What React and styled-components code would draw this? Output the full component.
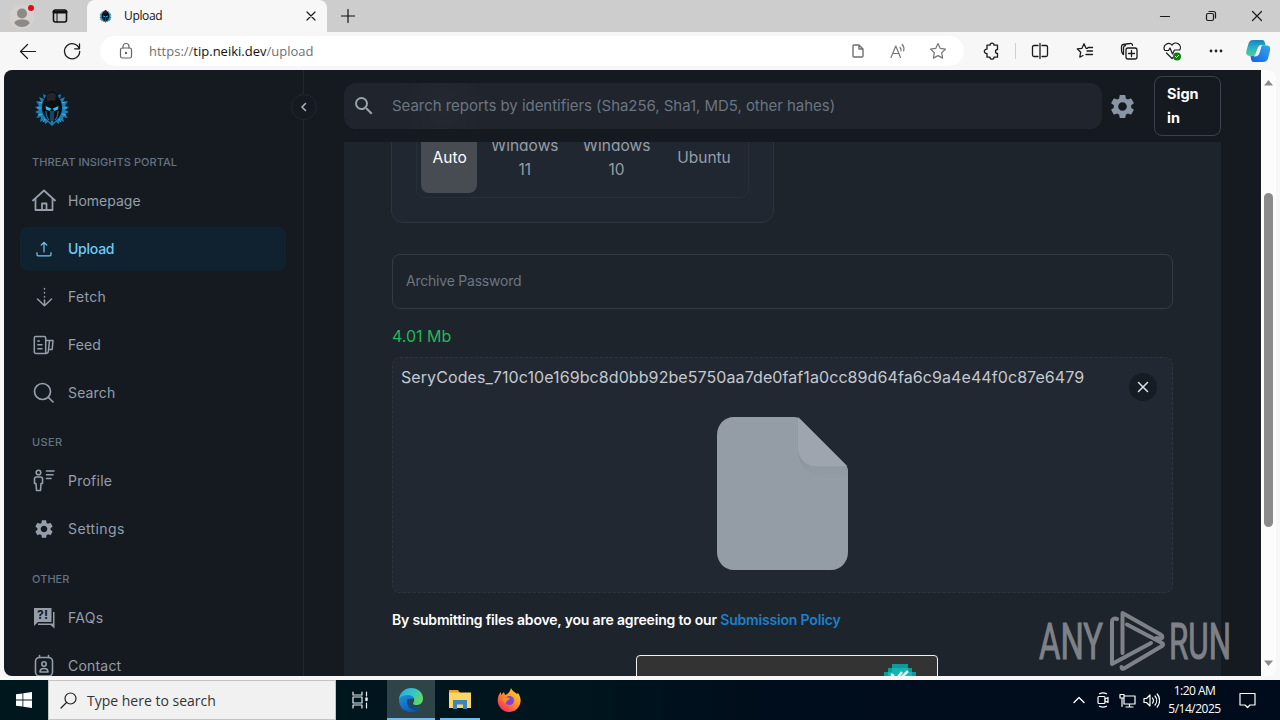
import React from 'react';
import styled, { createGlobalStyle } from 'styled-components';
import { MdSearch, MdSettings } from 'react-icons/md';

const GlobalStyle = createGlobalStyle`
  * {
    box-sizing: border-box;
  }

  body {
    margin: 0;
    overflow: hidden;
  }

  svg {
    display: block;
    flex-shrink: 0;
  }
`;

const Screen = styled.div`
  width: 1280px;
  height: 720px;
  display: flex;
  flex-direction: column;
  overflow: hidden;
  background: #f7f7f7;
  color: #1b1b1b;
  font-family: 'Open Sans', 'Noto Sans', sans-serif;
  font-size: 12px;
`;

/* browser chrome */

const TabStrip = styled.div`
  height: 32px;
  display: flex;
  align-items: center;
  background: #cdcdcd;
`;

const StripIcon = styled.div`
  width: ${(p) => p.$w}px;
  height: 32px;
  display: flex;
  align-items: center;
  justify-content: center;
`;

const Tab = styled.div`
  width: 240px;
  height: 32px;
  display: flex;
  align-items: center;
  padding: 0 9px 0 12px;
  border-radius: 8px 8px 0 0;
  background: #f7f7f7;
`;

const TabTitle = styled.span`
  flex: 1;
  margin-left: 12px;
  color: #111;
  font-size: 12px;
  line-height: 16px;
  letter-spacing: -0.35px;
`;

const WindowButtons = styled.div`
  display: flex;
  margin-left: auto;
`;

const Toolbar = styled.div`
  height: 38px;
  display: flex;
  align-items: center;
  background: #f7f7f7;
`;

const ToolIcon = styled.div`
  width: ${(p) => p.$w || 46}px;
  display: flex;
  align-items: center;
  justify-content: center;
`;

const AddressBar = styled.div`
  width: 864px;
  height: 30px;
  margin-left: 4px;
  display: flex;
  align-items: center;
  padding-left: 17px;
  border-radius: 15px;
  background: #fff;
`;

const Url = styled.span`
  flex: 1;
  margin-left: 14px;
  color: #707070;
  font-size: 13px;
  letter-spacing: 0;

  b {
    color: #111;
    font-weight: 400;
  }
`;

const Divider = styled.div`
  width: 1px;
  height: 16px;
  margin-left: -5px;
  background: #cfcfcf;
`;

/* page */

const Viewport = styled.div`
  height: 606px;
  margin: 0 4px;
  display: flex;
`;

const Page = styled.div`
  width: 1257px;
  height: 606px;
  display: flex;
  overflow: hidden;
  border-radius: 8px 0 0 8px;
  background: #151a21;
  color: #959ea9;
  font-family: Inter, 'Liberation Sans', sans-serif;
`;

const ScrollBar = styled.div`
  width: 15px;
  display: flex;
  flex-direction: column;
  align-items: center;
  justify-content: space-between;
  padding: 10px 0 10px;
  border-radius: 0 8px 8px 0;
  background: #fcfcfc;
`;

const ScrollThumb = styled.div`
  width: 9px;
  height: 334px;
  margin: auto 0 133px;
  border-radius: 5px;
  background: #8b8b8b;
`;

const Sidebar = styled.nav`
  position: relative;
  width: 300px;
  display: flex;
  flex-direction: column;
  flex-shrink: 0;
  padding: 18px 17px 0 16px;
  border-right: 1px solid #1f262e;
`;

const LogoBox = styled.div`
  height: 54px;
  flex-shrink: 0;
  padding: 3px 0 0 14px;
`;

const CollapseButton = styled.div`
  position: absolute;
  top: 24px;
  right: -14px;
  width: 26px;
  height: 26px;
  display: flex;
  align-items: center;
  justify-content: center;
  border: 1px solid #20272f;
  border-radius: 50%;
  background: #151a21;
`;

const SectionLabel = styled.div`
  height: ${(p) => p.$h}px;
  display: flex;
  align-items: flex-end;
  flex-shrink: 0;
  padding: 0 0 8px 12px;
  color: #637381;
  font-size: 11px;
  font-weight: 500;
  line-height: 18px;
  letter-spacing: ${(p) => p.$track || 0}px;
`;

const NavItem = styled.div`
  height: 44px;
  margin-bottom: 4px;
  display: flex;
  align-items: center;
  flex-shrink: 0;
  padding-left: 12px;
  border-radius: 8px;
  background: ${(p) => (p.$active ? '#10222f' : 'transparent')};
  color: ${(p) => (p.$active ? '#72c9f3' : '#959ea9')};
  font-size: 14px;
  font-weight: ${(p) => (p.$active ? 500 : 400)};
  letter-spacing: ${(p) => p.$track || 0}px;

  span {
    margin: 0 0 1px 12px;
  }
`;

const Main = styled.main`
  width: 957px;
  display: flex;
  flex-direction: column;
`;

const Header = styled.header`
  height: 72px;
  display: flex;
  align-items: center;
  flex-shrink: 0;
  padding: 0 40px;
`;

const SearchField = styled.div`
  width: 758px;
  height: 46px;
  display: flex;
  align-items: center;
  flex-shrink: 0;
  padding-left: 8px;
  border-radius: 12px;
  background: radial-gradient(ellipse 40px 60px at 100px 23px, #242931, #1f242d);
  color: #6b7581;
  font-size: 15px;
  letter-spacing: -0.04px;

  span {
    margin: 0 0 2px 16px;
  }
`;

const HeaderGear = styled.div`
  margin: 0 17px 0 6px;
`;

const SignInButton = styled.div`
  width: 67px;
  height: 60px;
  padding: 5px 12px;
  border: 1px solid #3b424b;
  border-radius: 8px;
  color: #fff;
  font-size: 14.5px;
  font-weight: 700;
  line-height: 24px;
`;

const Panel = styled.section`
  width: 877px;
  height: 534px;
  margin-left: 40px;
  padding: 0 48px;
  display: flex;
  flex-direction: column;
  overflow: hidden;
  background: #1d242b;
`;

const OsCard = styled.div`
  width: 383px;
  height: 120px;
  flex-shrink: 0;
  margin: -39px 0 0 -1px;
  padding: 12px 24px 24px;
  border: 1px solid #2d343c;
  border-radius: 12px;
  background: #202730;
`;

const OsToggle = styled.div`
  height: 82px;
  display: flex;
  gap: 2px;
  padding: 4px;
  border: 1px solid #282f37;
  border-radius: 8px;
`;

const OsOption = styled.div`
  width: ${(p) => p.$w}px;
  display: flex;
  align-items: center;
  justify-content: center;
  padding: 2px 0 0 1px;
  border-radius: 8px;
  background: ${(p) => (p.$selected ? '#474b52' : 'transparent')};
  color: ${(p) => (p.$selected ? '#fff' : '#959ea9')};
  font-size: 15.5px;
  line-height: 24px;
  text-align: center;
`;

const PasswordField = styled.div`
  height: 55px;
  margin-top: 31px;
  flex-shrink: 0;
  display: flex;
  align-items: center;
  padding: 0 0 2px 13px;
  border: 1px solid #343b43;
  border-radius: 8px;
  color: #6b7681;
  font-size: 14px;
  letter-spacing: -0.22px;
`;

const FileSize = styled.div`
  height: 48px;
  flex-shrink: 0;
  color: #22b95a;
  font-size: 16px;
  line-height: 54px;
`;

const DropZone = styled.div`
  position: relative;
  width: 781px;
  height: 236px;
  flex-shrink: 0;
  padding: 7px 8px;
  border: 1px dashed #2e353f;
  border-radius: 8px;
  background: #222831;
  color: #c4c9d0;
`;

const FileName = styled.div`
  height: 24px;
  font-size: 16px;
  line-height: 24px;
  letter-spacing: 0.085px;
  white-space: nowrap;
`;

const FilePreview = styled.div`
  display: flex;
  justify-content: center;
  padding-top: 28px;
`;

const RemoveButton = styled.div`
  position: absolute;
  top: 15px;
  right: 15px;
  width: 28px;
  height: 28px;
  display: flex;
  align-items: center;
  justify-content: center;
  border-radius: 50%;
  background: #161c24;
`;

const Policy = styled.p`
  height: 22px;
  margin: 16px 0 0;
  flex-shrink: 0;
  color: #fff;
  font-size: 14px;
  font-weight: 600;
  line-height: 22px;
  letter-spacing: -0.18px;
  white-space: nowrap;

  a {
    color: #1d80cb;
  }
`;

const Captcha = styled.div`
  width: 302px;
  height: 76px;
  margin: 24px 0 0 244px;
  flex-shrink: 0;
  display: flex;
  justify-content: flex-end;
  padding: 8px 21px;
  border: 1px solid #f0f0f0;
  border-radius: 4px;
  background: #333;
`;

const Watermark = styled.div`
  position: absolute;
  left: 1038px;
  top: 606px;
`;

/* taskbar */

const Taskbar = styled.div`
  height: 40px;
  margin-top: 4px;
  display: flex;
  align-items: center;
  background: linear-gradient(90deg, #00171d 0%, #00151d 45%, #000d1c 60%, #000c1b 100%);
  color: #fff;
`;

const StartButton = styled.div`
  width: 48px;
  height: 40px;
  display: flex;
  align-items: center;
  justify-content: center;
`;

const TaskSearch = styled.div`
  width: 288px;
  height: 40px;
  display: flex;
  align-items: center;
  padding-left: 11px;
  border: 1px solid #c3c3c3;
  background: #f1f1f1;
  color: #333;
  font-size: 14px;

  span {
    margin-left: 10px;
  }
`;

const TaskApp = styled.div`
  width: ${(p) => p.$w || 48}px;
  height: 40px;
  display: flex;
  align-items: center;
  justify-content: center;
  margin-left: ${(p) => p.$ml || 0}px;
  border-bottom: ${(p) => (p.$running ? '2px solid #76b9ed' : '0')};
  padding-top: ${(p) => (p.$running ? 2 : 0)}px;
  background: ${(p) => (p.$focused ? '#2f4449' : 'transparent')};
`;

const Tray = styled.div`
  display: flex;
  align-items: center;
  margin-left: auto;
`;

const TrayIcon = styled.div`
  width: 24px;
  display: flex;
  justify-content: center;
`;

const Clock = styled.div`
  width: 62px;
  padding-left: 1px;
  font-size: 12px;
  line-height: 18px;
  text-align: center;
  letter-spacing: -0.5px;
  white-space: nowrap;
`;

const Notifications = styled.div`
  width: 44px;
  display: flex;
  justify-content: center;
  margin-right: 11px;
`;

const Line = ({ size = 20, w, h, box, color = '#1b1b1b', sw = 1.2, children }) => (
  <svg
    width={w || size}
    height={h || size}
    viewBox={box || `0 0 ${w || size} ${h || size}`}
    fill="none"
    stroke={color}
    strokeWidth={sw}
    strokeLinecap="round"
    strokeLinejoin="round"
  >
    {children}
  </svg>
);

const Logo = ({ size }) => (
  <svg width={size} height={size} viewBox="0 0 36 36">
    <path
      d="M13 5L9 3l1 5-5-2 2 5-5-1 3 5-4 1 4 3-4 2 4 2-3 4 5-1-1 5 4-2 1 4 3-2 4 4 4-4 3 2 1-4 4 2-1-5 5 1-3-4 4-2-4-2 4-3-4-1 3-5-5 1 2-5-5 2 1-5-4 2z"
      fill="#1b7fb5"
    />
    <path d="M8 12l-3-1M7 17H3M8 23l-4 1M28 12l3-1M29 17h4M28 23l4 1M11 28l-2 3M25 28l2 3" stroke="#4fb7e6" strokeWidth="1" />
    <path d="M18 0c-6 3-10 9-10 17 0 7 4 11 8 14l2 1 2-1c4-3 8-7 8-14 0-8-4-14-10-17z" fill="#090f15" />
    <path d="M13 4c3-3 7-3 9 0l-1 6-4-1-4 2z" fill="#25262c" />
    <path d="M11.500 15l5.500 2.500-1 2.500-4-1.500zM24.500 15L19 17.500l1 2.500 4-1.500z" fill="#2fc0ef" />
    <path d="M16.500 20h3v9l-1.500 6-1.500-6z" fill="#247faf" />
    <path d="M12 20c0 4 1 7 3 9M24 20c0 4-1 7-3 9" fill="none" stroke="#1a6c98" strokeWidth="1.200" />
    <path d="M18 19v11" stroke="#0a1118" strokeWidth="1" />
  </svg>
);

const navIcons = {
  Homepage: (
    <Line size={24} color="currentColor" sw={1.8}>
      <path d="M1 11.500L12 1.500l11 10M3.500 9.500V21h17V9.500M10 21v-6.500h4.500V21" />
    </Line>
  ),
  Upload: (
    <Line size={24} color="currentColor" sw={1.2}>
      <path d="M12 15V5.500M9.300 8L12 5.300 14.700 8M5 15.500v2.200c0 .7.5 1.200 1.200 1.200h11.600c.7 0 1.200-.5 1.200-1.200v-2.200" />
    </Line>
  ),
  Fetch: (
    <Line size={24} color="currentColor" sw={1.5}>
      <path d="M12.500 3.500v.4M12.500 7.500v.4M12.500 11.500v.4M12.500 15v5.500M5.500 14l7 6.700 7-6.700" />
    </Line>
  ),
  Feed: (
    <Line size={24} color="currentColor" sw={1.5}>
      <path d="M3.800 3.500h8.400a1.500 1.500 0 0 1 1.500 1.500v15.500H4a1.700 1.700 0 0 1-1.700-1.700V5a1.500 1.500 0 0 1 1.500-1.500zM5.800 8h1.500M5.800 11.700h4.200M5.800 15.700h4.200M13.700 7.500h7.300l-.8 9h-3.200M17.500 7.800l-1.200 10.700c-.2 1.300-1 2-2.600 2" />
    </Line>
  ),
  Search: (
    <Line size={24} color="currentColor" sw={1.7}>
      <circle cx="10.500" cy="10.500" r="8" />
      <path d="M16.500 16.500l4.500 4.500" />
    </Line>
  ),
  Profile: (
    <Line size={24} color="currentColor" sw={1.6}>
      <circle cx="6.500" cy="3.500" r="2.300" />
      <path d="M4.500 8h4c1 0 2 .8 2 2v4.500H9l-.5 7h-4L4 14.500H2.500V10c0-1.200.8-2 2-2zM14.500 2H22M14.500 5.700H21M14.500 9.500H19" />
    </Line>
  ),
  Settings: (
    <svg width="24" height="24" viewBox="0 0 24 24">
      <MdSettings size={22} x={1} y={1} />
    </svg>
  ),
  FAQs: (
    <svg width="24" height="24" viewBox="0 0 24 24" fill="currentColor">
      <path d="M2 2h17.500v14H6l-4 4z" />
      <path d="M21 6h1.500v16.500l-4-3.500H6v-1.500h15z" />
      <text x="10.700" y="13" fill="#151a21" fontSize="12" fontWeight="700" textAnchor="middle">?!</text>
    </svg>
  ),
  Contact: (
    <Line size={24} color="currentColor" sw={1.6}>
      <rect x="3.500" y="3.500" width="17" height="18.500" rx="4" />
      <path d="M7.500 1.500v2M16.500 1.500v2" />
      <circle cx="12" cy="10" r="2.200" />
      <path d="M8 18c0-2.500 1.500-3.500 4-3.500s4 1 4 3.500z" />
    </Line>
  ),
};

const NavGroup = ({ items }) =>
  items.map(([name, track]) => (
    <NavItem key={name} $active={name === 'Upload'} $track={track}>
      {navIcons[name]}
      <span>{name}</span>
    </NavItem>
  ));

const BrowserTop = () => (
  <>
    <TabStrip>
      <StripIcon $w={44}>
        <svg width="28" height="28" viewBox="0 0 28 28">
          <circle cx="14" cy="15" r="12.500" fill="#d5d1ce" />
          <circle cx="14" cy="11.500" r="5" fill="#8c8987" />
          <path d="M6.500 21.500c0-3 3-4 7.500-4s7.500 1 7.500 4c-2 2.500-5 3.500-7.500 3.500s-5.500-1-7.500-3.500z" fill="#8c8987" />
          <circle cx="23" cy="6" r="3" fill="#e00b1c" />
        </svg>
      </StripIcon>
      <StripIcon $w={32}>
        <Line size={16} sw={1.6} color="#111">
          <rect x="1.500" y="2" width="13" height="12" rx="2" />
          <path d="M2 4h12" strokeWidth="3" />
          <path d="M5 5v9" strokeWidth="1" />
        </Line>
      </StripIcon>
      <StripIcon $w={11} />
      <Tab>
        <Logo size={13} />
        <TabTitle>Upload</TabTitle>
        <Line size={14}><path d="M3 3l8 8M11 3l-8 8" /></Line>
      </Tab>
      <StripIcon $w={42}>
        <Line size={14} color="#111"><path d="M7 .5v13M.5 7h13" /></Line>
      </StripIcon>
      <WindowButtons>
        <StripIcon $w={46}><Line size={12}><path d="M1.500 6.500h9" /></Line></StripIcon>
        <StripIcon $w={46}>
          <Line size={12}>
            <rect x="1.500" y="3.500" width="7" height="7" rx="1.500" />
            <path d="M4 1.500h4.500a2 2 0 0 1 2 2V8" />
          </Line>
        </StripIcon>
        <StripIcon $w={46}><Line size={12}><path d="M1.500 1.500l9 9M10.500 1.500l-9 9" /></Line></StripIcon>
      </WindowButtons>
    </TabStrip>
    <Toolbar>
      <ToolIcon $w={56}>
        <Line size={18}><path d="M16.500 9.500H1.500M8.500 2.500l-7 7 7 7" /></Line>
      </ToolIcon>
      <ToolIcon $w={32}>
        <Line size={18} sw={1.3}><path d="M16.200 6.500A7.600 7.600 0 1 0 16.700 9.500M16.500 2v4.800h-4.800" /></Line>
      </ToolIcon>
      <ToolIcon $w={8} />
      <AddressBar>
        <Line w={18} h={18} color="#666">
          <rect x="3.500" y="6" width="11" height="10" rx="1.800" />
          <path d="M6 6V4.500a3 3 0 0 1 6 0V6" />
          <circle cx="9" cy="11" r=".6" fill="#666" />
        </Line>
        <Url>https://<b>tip.neiki.dev</b>/upload</Url>
        <ToolIcon $w={40}>
          <Line w={12} h={14} color="#707070" sw={1.4}><path d="M1 2a1 1 0 0 1 1-1h5l4 4v7a1 1 0 0 1-1 1H2a1 1 0 0 1-1-1zM7 1v4h4" /></Line>
        </ToolIcon>
        <ToolIcon $w={40}>
          <Line size={16} color="#777">
            <path d="M1 14.500L5.800 3 10.500 14.500M2.600 10.500h6.400M10 4.500a4 4 0 0 1 1 3.500M12.200 1.500a7 7 0 0 1 1.500 6.300" />
          </Line>
        </ToolIcon>
        <ToolIcon $w={40}>
          <Line size={18} color="#777"><path d="M9 1.500l2.300 4.900 5.200.7-3.800 3.700.9 5.300L9 13.600l-4.600 2.500.9-5.300L1.500 7.100l5.200-.7z" /></Line>
        </ToolIcon>
        <ToolIcon $w={6} />
      </AddressBar>
      <ToolIcon $w={56}>
        <Line size={18} sw={1.3}>
          <path d="M4 3.200h3a2 2 0 0 1 4 0h3.500V7.500a2 2 0 0 0 0 4v3.700H11a2 2 0 0 1-4 0H4v-3.700a2.200 2.200 0 1 1 0-4.300z" />
        </Line>
      </ToolIcon>
      <Divider />
      <ToolIcon $w={48}>
        <Line size={18} sw={1.3}><path d="M9 1.500v15M7 3.500H3a1.500 1.500 0 0 0-1.500 1.500v8A1.500 1.500 0 0 0 3 14.500h4M11 3.500h4a1.500 1.500 0 0 1 1.500 1.500v8a1.500 1.500 0 0 1-1.500 1.500h-4" /></Line>
      </ToolIcon>
      <ToolIcon $w={42}>
        <Line size={18} sw={1.3}><path d="M11.500 6.300H10L8 1.800 6 6.300l-4.800.5 3.500 3.400-.9 5L7 13.500M11 9h5.500M10 12.500h6.500M12 5.500h4.500" /></Line>
      </ToolIcon>
      <ToolIcon $w={45}>
        <Line size={18} sw={1.3}>
          <rect x="6" y="6" width="11" height="11" rx="2" />
          <path d="M11.500 8.500v6M8.500 11.500h6M3.500 12.500C1 11 1.500 9 1.500 4.500A2 2 0 0 1 3 2.500L10 1.500a2 2 0 0 1 2.500 1.800M3.500 12.500V6a2.500 2.500 0 0 1 2-2.500" />
        </Line>
      </ToolIcon>
      <ToolIcon $w={42}>
        <Line size={19}>
          <path d="M1.500 8A4.500 4.500 0 0 1 9 3.200 4.500 4.500 0 0 1 16.700 8M2 8.500h3.500l1.500-2.500 2.500 6 2-4h5M3.500 11l5.500 5.500 1-1" />
          <circle cx="14" cy="14.500" r="4" fill="#107c10" stroke="none" />
          <path d="M12.500 14.500l1 1 2-2" stroke="#fff" strokeWidth="1" />
        </Line>
      </ToolIcon>
      <ToolIcon $w={46}>
        <Line size={16}><g fill="#222" stroke="none"><circle cx="3" cy="8" r="1.400" /><circle cx="8" cy="8" r="1.400" /><circle cx="13" cy="8" r="1.400" /></g></Line>
      </ToolIcon>
      <ToolIcon $w={38}>
        <svg width="24" height="24" viewBox="0 0 24 24">
          <defs>
            <linearGradient id="cpA" x1="0" y1="0" x2="0" y2="1"><stop offset="0" stopColor="#1782c8" /><stop offset=".5" stopColor="#2ab3c4" /><stop offset="1" stopColor="#4fd08a" /></linearGradient>
            <linearGradient id="cpB" x1="1" y1="0" x2="0" y2="1"><stop offset="0" stopColor="#35a9ea" /><stop offset="1" stopColor="#1560e0" /></linearGradient>
          </defs>
          <path d="M7 1h9c2 0 2.500 1 3 3l.7 2.500h-3c-2 0-3 1-3.500 3L11.500 14c-.5 2-1.500 3-3 3H4c-3 0-4.500-2-3.500-5.500l2-7C3.300 2 5 1 7 1z" fill="url(#cpA)" />
          <path d="M17 23H8c-2 0-2.500-1-3-3l-.5-3h4c2 0 3-1 3.500-3l1.500-5c.5-1.500 1.500-2.500 3-2.500h4c3 0 4.500 2 3.500 5.500l-2 7.500c-.8 2.500-2.500 3.500-5 3.500z" fill="url(#cpB)" />
          <path d="M15.500 6.500c-2 0-3 1-3.500 3L10 15c-.3 1-.7 1.700-1.500 2 3 0 4-1 4.500-3l1.500-5c.3-1.200.6-2 1-2.500z" fill="#f7f7f7" stroke="#f7f7f7" />
        </svg>
      </ToolIcon>
    </Toolbar>
  </>
);

const SidePanel = () => (
  <Sidebar>
    <LogoBox><Logo size={36} /></LogoBox>
    <SectionLabel $h={37} $track={0.05}>THREAT INSIGHTS PORTAL</SectionLabel>
    <NavGroup items={[['Homepage', 0], ['Upload', -0.25], ['Fetch', 0.3], ['Feed', 0.1], ['Search', 0.15]]} />
    <SectionLabel $h={40} $track={0.4}>USER</SectionLabel>
    <NavGroup items={[['Profile', 0.25], ['Settings', 0.4]]} />
    <SectionLabel $h={41} $track={0.05}>OTHER</SectionLabel>
    <NavGroup items={[['FAQs', 0.3], ['Contact', 0.2]]} />
    <CollapseButton>
      <Line size={12} color="#aab2bb" sw={1.6}><path d="M7.500 2.500L4 6l3.500 3.500" /></Line>
    </CollapseButton>
  </Sidebar>
);

const FileGlyph = () => (
  <svg width="131" height="153" viewBox="0 0 131 153">
    <defs>
      <linearGradient id="foldShade" x1="0" y1="0" x2="0" y2="1">
        <stop offset="0" stopColor="#868e98" />
        <stop offset="1" stopColor="#949ca5" />
      </linearGradient>
    </defs>
    <path d="M17 0h60c3 0 5 1 7 3l44 44c2 2 3 4 3 7v81c0 10-7 18-17 18H17c-10 0-17-8-17-18V18C0 8 7 0 17 0z" fill="#949ca5" />
    <path d="M81 32c2 12 9 18 19 18h30v13c-26 0-49-4-49-31z" fill="url(#foldShade)" opacity=".7" />
    <path d="M81 0l49 49h-31c-10 0-18-8-18-18z" fill="#9fa5af" />
  </svg>
);

const UploadPage = () => (
  <Main>
    <Header>
      <SearchField>
        <MdSearch size={24} color="#99a3ae" />
        <span>Search reports by identifiers (Sha256, Sha1, MD5, other hahes)</span>
      </SearchField>
      <HeaderGear><MdSettings size={29} color="#8995a2" /></HeaderGear>
      <SignInButton>Sign in</SignInButton>
    </Header>
    <Panel>
      <OsCard>
        <OsToggle>
          <OsOption $w={57} $selected>Auto</OsOption>
          <OsOption $w={91}>Windows<br />11</OsOption>
          <OsOption $w={91}>Windows<br />10</OsOption>
          <OsOption $w={82}>Ubuntu</OsOption>
        </OsToggle>
      </OsCard>
      <PasswordField>Archive Password</PasswordField>
      <FileSize>4.01 Mb</FileSize>
      <DropZone>
        <FileName>SeryCodes_710c10e169bc8d0bb92be5750aa7de0faf1a0cc89d64fa6c9a4e44f0c87e6479</FileName>
        <FilePreview><FileGlyph /></FilePreview>
        <RemoveButton>
          <Line size={14} color="#dfe2e6" sw={1.5}><path d="M2.500 2.500l9 9M11.500 2.500l-9 9" /></Line>
        </RemoveButton>
      </DropZone>
      <Policy>By submitting files above, you are agreeing to our <a>Submission Policy</a></Policy>
      <Captcha>
        <svg width="32" height="32" viewBox="0 0 32 32" shapeRendering="crispEdges">
          <path d="M8 0h16v4h4v4h4v24H0V8h4V4h4z" fill="#0d9a98" />
          <path d="M8 4h16v4h4v24H4V8h4z" fill="#12b5b0" />
          <path d="M7 10l3 2M14 13l4-5M18 13l6-6" stroke="#e7f7f6" strokeWidth="2.500" shapeRendering="auto" />
        </svg>
      </Captcha>
    </Panel>
  </Main>
);

const AnyRun = () => (
  <Watermark>
    <svg width="194" height="68" viewBox="0 0 194 68" opacity=".64">
      <g fill="#b5b8bd" stroke="#b5b8bd" strokeWidth="1" fontFamily="Roboto, sans-serif" fontSize="50">
        <text x="1" y="53" textLength="64" lengthAdjust="spacingAndGlyphs">ANY</text>
        <text x="131" y="53" textLength="62" lengthAdjust="spacingAndGlyphs">RUN</text>
      </g>
      <path
        d="M79 13c-3-1-5 0-5 3v42l39-21M84.500 47V7l38 21.500c3 2 2 4-1 4l-3-.5M89 18.500l35 18.500c1.500 1 1.500 2 0 3L86 62.500c-1.500.7-2.500 0-2.500-1.500"
        fill="none"
        stroke="#b5b8bd"
        strokeWidth="4"
        strokeLinecap="round"
        strokeLinejoin="round"
      />
    </svg>
  </Watermark>
);

const WindowsTaskbar = () => (
  <Taskbar>
    <StartButton>
      <svg width="16" height="16" viewBox="0 0 16 16" fill="#fff">
        <path d="M0 2.300l6.500-.9v6.200H0zM7.300 1.300L16 0v7.600H7.300zM0 8.400h6.500v6.200L0 13.700zM7.300 8.400H16V16l-8.700-1.300z" />
      </svg>
    </StartButton>
    <TaskSearch>
      <Line size={17} color="#222"><circle cx="10.500" cy="6.500" r="5.500" /><path d="M6.500 10.500L1 16" /></Line>
      <span>Type here to search</span>
    </TaskSearch>
    <TaskApp>
      <Line size={18} color="#e8eef0"><path d="M2 1v3h9V1M2 17v-3h9v3M2 6h9v6H2zM15.500 1v4M15.500 12v5" /><path d="M15.500 7.500v1.500" strokeWidth="2.500" /></Line>
    </TaskApp>
    <TaskApp $ml={3} $focused $running>
      <svg width="26" height="26" viewBox="0 0 26 26">
        <defs>
          <linearGradient id="edgeTop" x1="0" y1="0" x2="1" y2=".4"><stop offset="0" stopColor="#27a9e8" /><stop offset=".6" stopColor="#35c4c9" /><stop offset="1" stopColor="#5fd668" /></linearGradient>
          <linearGradient id="edgeLeft" x1="0" y1="0" x2=".6" y2="1"><stop offset="0" stopColor="#2196e0" /><stop offset="1" stopColor="#1059b0" /></linearGradient>
        </defs>
        <path d="M1 13C1 7 6 5 10 6c4 0 6 3 5 6-2-1-4 0-4 3 0 5 5 7 12 5-3 4-6 5-10 5C6 25 1 20 1 13z" fill="url(#edgeLeft)" />
        <path d="M1 12C2 5 7 1 13 1c7 0 12 4.500 12 10.500 0 4.500-3 6.500-6.500 6.500-3.500 0-4-1.200-3-2.500C17.500 12 15 8 10.500 8 6 8 2.500 9.500 1 12z" fill="url(#edgeTop)" />
        <path d="M9.500 12c-2 6 3 12 9.500 11.500 2-.8 3.300-2 4-3.500-6 2-12-1-12-5 0-1.500.5-2.500 1.500-3.200z" fill="#0d4a94" />
      </svg>
    </TaskApp>
    <TaskApp $w={40} $ml={5} $running>
      <svg width="22" height="22" viewBox="0 0 22 22">
        <path d="M0 1h9l2 3H0z" fill="#e8a420" />
        <path d="M0 3.500h22V19H0z" fill="#fdd565" />
        <path d="M4 11h14v9h-4v-4.500H8V20H4z" fill="#3b87bd" />
      </svg>
    </TaskApp>
    <TaskApp $ml={5}>
      <svg width="24" height="24" viewBox="0 0 24 24">
        <defs>
          <linearGradient id="fox" x1="1" y1="0" x2=".2" y2="1"><stop offset="0" stopColor="#ffe53b" /><stop offset=".45" stopColor="#ff9a26" /><stop offset="1" stopColor="#f2285e" /></linearGradient>
        </defs>
        <path d="M14 0c1 3 4 4 6 6l1-1c2 3 3 6 2.500 9C22.500 20 18 24 12 24S1 19 .7 13C.6 9 2 6 4 4v3l3-3 1 3c2-1 5-2 6-7z" fill="url(#fox)" />
        <circle cx="12.500" cy="12.500" r="4.500" fill="#7a45d8" />
        <path d="M5 10c3-2 5 0 8 0-1 3-4 2-4 5-2 0-4-2-4-5z" fill="#ff8a1e" />
      </svg>
    </TaskApp>
    <Tray>
      <TrayIcon><Line size={12} color="#fff" sw={1.4}><path d="M1 8.500l5-5 5 5" /></Line></TrayIcon>
      <TrayIcon>
        <Line size={16} color="#fff">
          <rect x="3" y="4.500" width="7" height="7" rx="1" />
          <path d="M10 7l3-1.500v5L10 9M4.500 1.800c2-1 5-1 7 0M4.500 14.200c2 1 5 1 7 0" />
        </Line>
      </TrayIcon>
      <TrayIcon>
        <Line size={17} color="#fff"><path d="M5 4h11v8H5zM10.500 12v3M7 15h7M1 2.500h4v3.500H1zM3 6v8.500" /></Line>
      </TrayIcon>
      <TrayIcon>
        <Line size={17} color="#fff"><path d="M1 6.500h2.500L7 3v11l-3.500-3.500H1zM9.500 6a4 4 0 0 1 0 5M12 4a7 7 0 0 1 0 9M14.200 2a10 10 0 0 1 0 13" /></Line>
      </TrayIcon>
      <Clock>1:20 AM<br />5/14/2025</Clock>
      <Notifications>
        <Line size={17} color="#fff"><path d="M1 1.500h15v11.500h-5L8.500 15.500 6 13H1z" /></Line>
      </Notifications>
    </Tray>
  </Taskbar>
);

const App = () => {
  return (
    <Screen>
      <GlobalStyle />
      <BrowserTop />
      <Viewport>
        <Page>
          <SidePanel />
          <UploadPage />
        </Page>
        <ScrollBar>
          <svg width="9" height="6" viewBox="0 0 9 6" fill="#8b8b8b"><path d="M0 5.500L4.500 0 9 5.500z" /></svg>
          <ScrollThumb />
          <svg width="9" height="6" viewBox="0 0 9 6" fill="#8b8b8b"><path d="M0 .5L4.500 6 9 .5z" /></svg>
        </ScrollBar>
      </Viewport>
      <WindowsTaskbar />
      <AnyRun />
    </Screen>
  );
};

export default App;
